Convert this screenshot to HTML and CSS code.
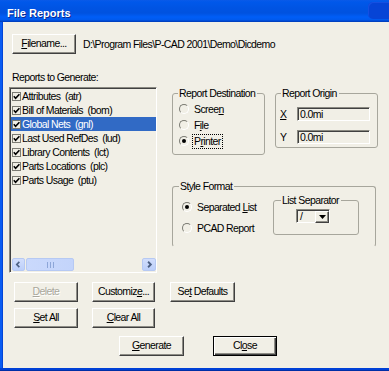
FILE: index.html
```html
<!DOCTYPE html>
<html>
<head>
<meta charset="utf-8">
<link rel="stylesheet" href="styles.css">
</head>
<body>
<div class="window">
  <div class="titlebar">
    <span class="title">File Reports</span>
    <span class="tb-btn"></span>
  </div>
  <div class="content">
    <div class="file-row">
      <button class="btn w64"><span><u>F</u>ilename...</span></button>
      <span class="path">D:\Program Files\P-CAD 2001\Demo\Dicdemo</span>
    </div>
    <div class="main">
      <div class="left">
        <div class="label">Reports to Generate:</div>
        <div class="list">
          <div class="items">
            <div class="item"><span class="cb"><svg width="7" height="7" viewBox="0 0 7 7"><polyline points="0.8,3.2 2.6,5.2 6.4,1.2" fill="none" stroke="#000" stroke-width="1.6"/></svg></span><span class="itext">Attributes  (atr)</span></div>
            <div class="item"><span class="cb"><svg width="7" height="7" viewBox="0 0 7 7"><polyline points="0.8,3.2 2.6,5.2 6.4,1.2" fill="none" stroke="#000" stroke-width="1.6"/></svg></span><span class="itext">Bill of Materials  (bom)</span></div>
            <div class="item sel"><span class="cb"><svg width="7" height="7" viewBox="0 0 7 7"><polyline points="0.8,3.2 2.6,5.2 6.4,1.2" fill="none" stroke="#000" stroke-width="1.6"/></svg></span><span class="itext">Global Nets  (gnl)</span></div>
            <div class="item"><span class="cb"><svg width="7" height="7" viewBox="0 0 7 7"><polyline points="0.8,3.2 2.6,5.2 6.4,1.2" fill="none" stroke="#000" stroke-width="1.6"/></svg></span><span class="itext">Last Used RefDes  (lud)</span></div>
            <div class="item"><span class="cb"><svg width="7" height="7" viewBox="0 0 7 7"><polyline points="0.8,3.2 2.6,5.2 6.4,1.2" fill="none" stroke="#000" stroke-width="1.6"/></svg></span><span class="itext">Library Contents  (lct)</span></div>
            <div class="item"><span class="cb"><svg width="7" height="7" viewBox="0 0 7 7"><polyline points="0.8,3.2 2.6,5.2 6.4,1.2" fill="none" stroke="#000" stroke-width="1.6"/></svg></span><span class="itext">Parts Locations  (plc)</span></div>
            <div class="item"><span class="cb"><svg width="7" height="7" viewBox="0 0 7 7"><polyline points="0.8,3.2 2.6,5.2 6.4,1.2" fill="none" stroke="#000" stroke-width="1.6"/></svg></span><span class="itext">Parts Usage  (ptu)</span></div>
          </div>
          <div class="hscroll">
            <span class="sb-btn lbtn"><svg width="13" height="13" viewBox="0 0 13 13"><polyline points="7.5,3.5 4.5,6.5 7.5,9.5" fill="none" stroke="#4d6185" stroke-width="2"/></svg></span>
            <span class="sb-thumb"><svg width="7" height="6" viewBox="0 0 7 6"><rect x="0" y="0" width="1" height="6" fill="#8da6d8"/><rect x="3" y="0" width="1" height="6" fill="#8da6d8"/><rect x="6" y="0" width="1" height="6" fill="#8da6d8"/></svg></span>
            <span class="sb-track"></span>
            <span class="sb-btn rbtn"><svg width="13" height="13" viewBox="0 0 13 13"><polyline points="5.5,3.5 8.5,6.5 5.5,9.5" fill="none" stroke="#4d6185" stroke-width="2"/></svg></span>
          </div>
        </div>
      </div>
      <div class="right">
        <div class="top-groups">
          <div class="group dest">
            <span class="legend">Report Destination</span>
            <div class="radio-row"><span class="radio"></span><span>Scree<u>n</u></span></div>
            <div class="radio-row"><span class="radio"></span><span>F<u>i</u>le</span></div>
            <div class="radio-row"><span class="radio on"></span><span class="focus">P<u>r</u>inter</span></div>
          </div>
          <div class="group origin">
            <span class="legend">Report Origin</span>
            <div class="field-row"><span class="flabel"><u>X</u></span><span class="field">0.0mi</span></div>
            <div class="field-row"><span class="flabel">Y</span><span class="field">0.0mi</span></div>
          </div>
        </div>
        <div class="group style">
          <span class="legend">Style Format</span>
          <div class="style-radios">
            <div class="sr-row"><span class="radio on"></span><span>Separated <u>L</u>ist</span></div>
            <div class="sr-row"><span class="radio"></span><span>PCAD Report</span></div>
          </div>
          <div class="group listsep">
            <span class="legend">List Separator</span>
            <div class="combo"><span class="combo-text">/</span><span class="combo-btn"><svg width="7" height="4" viewBox="0 0 7 4"><polygon points="0,0 7,0 3.5,4" fill="#000"/></svg></span></div>
          </div>
        </div>
      </div>
    </div>
    <div class="buttons">
      <div class="brow">
        <button class="btn w64 disabled"><span><u>D</u>elete</span></button>
        <button class="btn w63 gap14"><span>Customiz<u>e</u>...</span></button>
        <button class="btn w65 gap15"><span>Se<u>t</u> Defaults</span></button>
      </div>
      <div class="brow r2">
        <button class="btn w64"><span><u>S</u>et All</span></button>
        <button class="btn w63 gap14"><span><u>C</u>lear All</span></button>
      </div>
      <div class="brow r3">
        <button class="btn w65"><span><u>G</u>enerate</span></button>
        <button class="btn w64 gap29 default"><span>Cl<u>o</u>se</span></button>
      </div>
    </div>
  </div>
  <div class="frame-bottom"></div>
</div>
</body>
</html>
```

FILE: styles.css
```css
* { box-sizing: border-box; }
html, body { margin: 0; padding: 0; }
body {
  width: 389px;
  height: 371px;
  overflow: hidden;
  font-family: "Liberation Sans", Arial, sans-serif;
  font-size: 10.5px;
  letter-spacing: -0.6px;
  color: #000;
}
u { text-underline-offset: 1px; }

.window {
  width: 389px;
  height: 371px;
  display: flex;
  flex-direction: column;
  overflow: hidden;
  background: linear-gradient(to right, #0a5cf2 0, #0a5cf2 2px, #0345d6 2px, #0345d6 3px, #0053e0 3px);
}
.titlebar {
  height: 22px;
  flex: none;
  display: flex;
  align-items: flex-start;
  padding-left: 7px;
  background: linear-gradient(#0a5ae8 0, #0058ea 2px, #0054e3 8px, #0052df 13px, #005ef7 17px, #0059ec 20px, #0043c9 21px, #003cb8 22px);
}
.title {
  margin-top: 5px;
  line-height: 16px;
  font-size: 11px;
  font-weight: bold;
  letter-spacing: 0;
  color: #fff;
  text-shadow: 1px 1px #0a2a90;
}
.tb-btn {
  margin-left: auto;
  margin-top: 2px;
  margin-right: -6px;
  width: 27px;
  height: 17px;
  border-radius: 5px 0 0 5px;
  background: #0644d6;
  box-shadow: inset 1px 1px #1550e2;
}

.content {
  flex: 1;
  margin-left: 3px;
  background: #f1efe6;
}
.frame-bottom {
  height: 3px;
  flex: none;
  background: linear-gradient(#0040d6 0, #0040d6 2px, #002ea6 2px);
}

/* buttons */
.btn {
  height: 20px;
  padding: 0 0 1px 0;
  margin: 0;
  font: inherit;
  letter-spacing: inherit;
  color: #000;
  background: #f1efe6;
  border: 1px solid;
  border-color: #fff #404040 #404040 #fff;
  box-shadow: inset -1px -1px #8e8d86;
  display: flex;
  align-items: center;
  justify-content: center;
  line-height: 13px;
  white-space: nowrap;
}
.btn.default {
  border: 1px solid #000;
  box-shadow: inset 1px 1px #fff, inset -1px -1px #404040, inset -2px -2px #8e8d86;
}
.btn.disabled { color: #a9a79b; text-shadow: 1px 1px #fff; }
.w63 { width: 63px; }
.w64 { width: 64px; }
.w65 { width: 65px; }
.gap14 { margin-left: 14px; }
.gap15 { margin-left: 15px; }
.gap29 { margin-left: 29px; }

.file-row {
  display: flex;
  align-items: center;
  margin-top: 12px;
  padding-left: 9px;
  height: 20px;
}
.path { margin-left: 7px; line-height: 13px; white-space: nowrap; }

.main {
  display: flex;
  margin-top: 17px;
  padding-left: 6px;
}
.left { width: 148px; flex: none; }
.label { padding-left: 3px; line-height: 13px; height: 13px; }
.list {
  margin-top: 3px;
  height: 186px;
  border: 1px solid;
  border-color: #8a8981 #fff #fff #8a8981;
  box-shadow: inset 1px 1px #404040;
  display: flex;
  flex-direction: column;
}
.items { flex: 1; padding: 1px 0 0 1px; }
.item {
  height: 14px;
  display: flex;
  align-items: center;
  white-space: pre;
  line-height: 13px;
}
.item.sel { background: #316ac5; color: #fff; }
.cb {
  width: 9px;
  height: 9px;
  margin: 0 1px 0 1px;
  border: 1px solid #7b7b73;
  background: #f1efe6;
  display: flex;
  align-items: center;
  justify-content: center;
  flex: none;
}
.cb svg { display: block; }

.hscroll {
  height: 13px;
  margin: 0 0 1px 2px;
  display: flex;
}
.sb-btn {
  width: 14px;
  height: 13px;
  flex: none;
  border: 1px solid #b6c9f3;
  border-radius: 2px;
  background: linear-gradient(#d2defc, #bccffa);
  display: flex;
  align-items: center;
  justify-content: center;
}
.sb-btn.lbtn { width: 13px; }
.sb-btn svg { display: block; }
.sb-thumb {
  width: 48px;
  height: 13px;
  margin-left: 1px;
  flex: none;
  border: 1px solid #b6c9f3;
  border-radius: 2px;
  background: linear-gradient(to right, #cad9fc, #c3d4fb);
  display: flex;
  align-items: center;
  justify-content: center;
}
.sb-thumb svg { display: block; }
.sb-track { flex: 1; }

/* right side */
.right { margin-left: 15px; flex: none; }
.top-groups {
  display: flex;
  gap: 10px;
  margin-top: 22px;
  align-items: flex-start;
}
.group {
  position: relative;
  border: 1px solid #a7a69c;
  border-radius: 3px;
}
.legend {
  position: absolute;
  top: -7px;
  left: 5px;
  padding: 0 2px 0 1px;
  line-height: 13px;
  background: #f1efe6;
  white-space: nowrap;
}
.dest {
  width: 93px;
  height: 62px;
  padding: 7px 0 0 6px;
}
.radio-row, .sr-row {
  height: 16px;
  display: flex;
  align-items: center;
  line-height: 13px;
}
.radio {
  width: 10px;
  height: 10px;
  flex: none;
  border-radius: 50%;
  border: 1px solid;
  border-color: #7b7b73 #fff #fff #7b7b73;
  margin-right: 5px;
  position: relative;
  background: #f1efe6;
}
.radio.on::after {
  content: "";
  position: absolute;
  left: 2px;
  top: 2px;
  width: 4px;
  height: 4px;
  border-radius: 50%;
  background: #000;
}
.focus {
  outline: 1px dotted #000;
  outline-offset: 0;
  padding: 0 1px;
  margin-left: -1px;
}

.origin {
  width: 103px;
  height: 55px;
  padding: 13px 0 0 4px;
}
.field-row {
  display: flex;
  align-items: center;
  height: 14px;
  line-height: 13px;
}
.field-row + .field-row { margin-top: 9px; }
.flabel { width: 17px; flex: none; }
.field {
  width: 73px;
  height: 14px;
  border: 1px solid;
  border-color: #8a8981 #fff #fff #8a8981;
  box-shadow: inset 1px 1px #404040;
  padding-left: 2px;
  line-height: 12px;
}

.style {
  width: 204px;
  height: 61px;
  margin-top: 31px;
  display: flex;
  align-items: flex-start;
  border-bottom-color: transparent;
}
.style > .legend { left: 6px; }
.style-radios {
  width: 100px;
  flex: none;
  padding: 12px 0 0 9px;
}
.sr-row + .sr-row { margin-top: 5px; }
.listsep {
  width: 86px;
  height: 35px;
  margin-top: 13px;
  flex: none;
}
.listsep > .legend { left: 7px; }
.combo {
  margin: 8px 0 0 22px;
  width: 34px;
  height: 14px;
  display: flex;
  border: 1px solid;
  border-color: #8a8981 #fff #fff #8a8981;
  box-shadow: inset 1px 1px #404040;
  padding: 1px 0 0 1px;
}
.combo-text { flex: 1; padding-left: 2px; line-height: 11px; }
.combo-btn {
  width: 14px;
  height: 12px;
  flex: none;
  background: #f1efe6;
  border: 1px solid;
  border-color: #fff #404040 #404040 #fff;
  box-shadow: inset -1px -1px #8e8d86;
  display: flex;
  align-items: center;
  justify-content: center;
}
.combo-btn svg { display: block; }

.buttons { margin-top: 9px; }
.brow { display: flex; padding-left: 11px; }
.brow.r2 { margin-top: 6px; }
.brow.r3 { margin-top: 8px; padding-left: 116px; }
```
